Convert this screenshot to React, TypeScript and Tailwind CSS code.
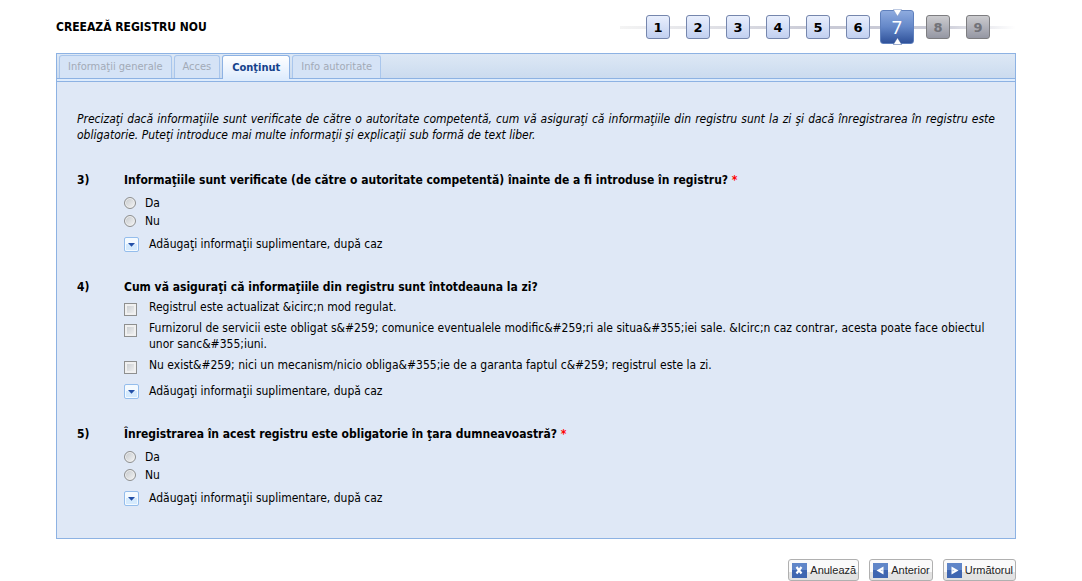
import React, { useState } from 'react';
import clsx from 'clsx';

interface Question {
  id: string;
  number: string;
  title: string;
  required?: boolean;
  type: 'radio' | 'checkbox';
  options: string[];
}

const tabs = ['Informaţii generale', 'Acces', 'Conţinut', 'Info autoritate'];

const steps = [1, 2, 3, 4, 5, 6, 7, 8, 9];
const currentStep = 7;

const questions: Question[] = [
  {
    id: 'verified',
    number: '3)',
    title: 'Informaţiile sunt verificate (de către o autoritate competentă) înainte de a fi introduse în registru?',
    required: true,
    type: 'radio',
    options: ['Da', 'Nu'],
  },
  {
    id: 'updated',
    number: '4)',
    title: 'Cum vă asiguraţi că informaţiile din registru sunt întotdeauna la zi?',
    type: 'checkbox',
    options: [
      'Registrul este actualizat &icirc;n mod regulat.',
      'Furnizorul de servicii este obligat s&#259; comunice eventualele modific&#259;ri ale situa&#355;iei sale. &Icirc;n caz contrar, acesta poate face obiectul unor sanc&#355;iuni.',
      'Nu exist&#259; nici un mecanism/nicio obliga&#355;ie de a garanta faptul c&#259; registrul este la zi.',
    ],
  },
  {
    id: 'mandatory',
    number: '5)',
    title: 'Înregistrarea în acest registru este obligatorie în ţara dumneavoastră?',
    required: true,
    type: 'radio',
    options: ['Da', 'Nu'],
  },
];

const StepButton: React.FC<{ step: number }> = ({ step }) => {
  if (step === currentStep) {
    return (
      <button
        type="button"
        aria-current="step"
        className="relative -ml-1.5 -mr-1 flex h-[34px] w-[34px] items-center justify-center rounded-[3px] border border-[#5f80bd] bg-linear-to-b from-[#8eabdf] via-[#6487c8] to-[#30529a] font-['Noto_Sans',sans-serif] text-lg text-white"
      >
        <svg className="absolute -top-0.5 left-3 h-2 w-[9px]" viewBox="0 0 9 8" aria-hidden="true">
          <path d="M.3 .5h8.4L4.5 7.3z" fill="#fff" stroke="#7d95c4" strokeWidth=".5" />
        </svg>
        {step}
        <svg className="absolute -bottom-0.5 left-3 h-2 w-[9px]" viewBox="0 0 9 8" aria-hidden="true">
          <path d="M.3 7.5h8.4L4.5 .7z" fill="#fff" stroke="#3c5a98" strokeWidth=".5" />
        </svg>
      </button>
    );
  }

  return (
    <button
      type="button"
      disabled={step > currentStep}
      className={clsx(
        "flex h-6 w-6 items-center justify-center rounded-[3px] border pt-px font-['DejaVu_Sans',sans-serif] text-[13px] font-bold",
        step > currentStep
          ? 'border-[#7d7d80] bg-linear-to-b from-[#cccccf] to-[#9597a3] text-[#717278]'
          : 'border-[#7586ad] bg-linear-to-b from-[#e9effd] to-[#c2d0f0] text-black'
      )}
    >
      {step}
    </button>
  );
};

const Expander: React.FC = () => (
  <button type="button" className="flex h-4 items-center gap-2.5 text-left">
    <svg className="h-[15px] w-[15px]" viewBox="0 0 15 15" aria-hidden="true">
      <rect x=".5" y=".5" width="14" height="14" rx="1.5" fill="#f4faff" stroke="#94bdec" />
      <path d="M2 7h11v6H2z" fill="#d5eafd" />
      <path d="M4 6h7L7.5 9.8z" fill="#2350a8" />
    </svg>
    Adăugaţi informaţii suplimentare, după caz
  </button>
);

const QuestionBlock: React.FC<{ question: Question }> = ({ question }) => (
  <fieldset className="flex">
    <div className="w-[47px] shrink-0 font-bold">{question.number}</div>
    <div className="min-w-0 flex-1">
      <legend className="font-bold">
        {question.title}
        {question.required && <span className="text-[#f00]"> *</span>}
      </legend>

      {question.type === 'radio' ? (
        <div className="my-1.5">
          {question.options.map((option) => (
            <label key={option} className="flex h-[18px] items-center gap-[9px]">
              <input
                type="radio"
                name={question.id}
                className="h-3 w-3 appearance-none rounded-full border border-[#8e8f8f] bg-linear-to-br from-[#c4c8cc] to-[#f6f6f6] shadow-[inset_0_0_0_1px_#f0f0f0] checked:from-[#2350a8] checked:to-[#6086c8]"
              />
              {option}
            </label>
          ))}
        </div>
      ) : (
        <div className="mb-2.5 mt-1 flex flex-col gap-[5px]">
          {question.options.map((option) => (
            <label key={option} className="flex items-start gap-3">
              <input
                type="checkbox"
                name={question.id}
                className="-mb-1 mt-1 h-[13px] w-[13px] shrink-0 appearance-none border border-[#8e8f8f] bg-linear-to-br from-[#c4c8cc] to-[#f6f6f6] shadow-[inset_0_0_0_2px_#f0f0f0] checked:from-[#2350a8] checked:to-[#6086c8]"
              />
              <span>{option}</span>
            </label>
          ))}
        </div>
      )}

      <Expander />
    </div>
  </fieldset>
);

const ActionButton: React.FC<{ label: string; children: React.ReactNode }> = ({ label, children }) => (
  <button
    type="button"
    className="flex h-[22px] items-center gap-[3px] rounded-[3px] border border-[#b0b0b0] bg-linear-to-b from-[#fafafa] from-60% to-[#e2e2e2] to-60% pl-[3px] pr-0.5 font-['Liberation_Sans',Arial,sans-serif] text-[11px] text-[#222]"
  >
    <svg className="h-[15px] w-[15px]" viewBox="0 0 15 15" aria-hidden="true">
      <path d="M0 0h15v15H0z" fill="#3f66b1" />
      <path d="M0 0h15v7H0z" fill="#6086c8" />
      {children}
    </svg>
    {label}
  </button>
);

export default function App() {
  const [activeTab, setActiveTab] = useState('Conţinut');

  return (
    <main className="bg-white pl-14 pr-[66px] pt-[5px] font-['DejaVu_Sans_Condensed','DejaVu_Sans',sans-serif] text-xs leading-4 text-black">
      <div className="mx-auto max-w-[960px]">
        <header className="flex h-12 items-start justify-between">
          <h1 className="pt-3.5 font-bold">CREEAZĂ REGISTRU NOU</h1>
          <nav
            aria-label="Paşi"
            className="flex h-11 items-center gap-4 bg-[linear-gradient(to_right,#f4f4f4,#c9cad6_50%,#c9cad6_80%,transparent)] bg-[length:100%_3px] bg-center bg-no-repeat px-[26px]"
          >
            {steps.map((step) => (
              <StepButton key={step} step={step} />
            ))}
          </nav>
        </header>

        <section className="border border-[#8db2e3] bg-[#dfe8f6]">
          <div className="border-b border-[#8db2e3] bg-[#deecfd]">
            <div
              role="tablist"
              className="mb-0.5 flex h-[25px] items-end gap-0.5 border-b border-[#8db2e3] bg-linear-to-b from-[#dde8f5] to-[#cbdbef] px-0.5 text-[11px]"
            >
              {tabs.map((tab) => (
                <button
                  key={tab}
                  type="button"
                  role="tab"
                  aria-selected={tab === activeTab}
                  onClick={() => setActiveTab(tab)}
                  className={clsx(
                    'rounded-t-[3px] border border-b-0',
                    tab === activeTab
                      ? '-mb-px h-6 border-[#8db2e3] bg-linear-to-b from-white to-[#deecfd] px-[9px] font-bold text-[#15428b]'
                      : 'h-[23px] border-[#a9c6ec] bg-[#d5e3f6] px-2 text-[#a2aab6]'
                  )}
                >
                  {tab}
                </button>
              ))}
            </div>
          </div>

          <div className="px-5 pb-8 pt-[29px]">
            <p className="mb-[29px] text-justify italic">
              Precizaţi dacă informaţiile sunt verificate de către o autoritate competentă, cum vă asiguraţi că
              informaţiile din registru sunt la zi şi dacă înregistrarea în registru este obligatorie. Puteţi
              introduce mai multe informaţii şi explicaţii sub formă de text liber.
            </p>

            <form className="space-y-[27px]">
              {questions.map((question) => (
                <QuestionBlock key={question.id} question={question} />
              ))}
            </form>
          </div>
        </section>

        <footer className="flex justify-end gap-2.5 pt-5">
          <ActionButton label="Anulează">
            <path d="M4.5 4l5 6.5M9.500 4l-5 6.500" stroke="#fff" strokeWidth="2.2" />
          </ActionButton>
          <ActionButton label="Anterior">
            <path d="M10.500 3.500v8L3.500 7.500z" fill="#fff" />
            <path d="M9.500 6.500v2L7.500 7.500z" fill="#a9bfe2" />
          </ActionButton>
          <ActionButton label="Următorul">
            <path d="M4.500 3.500v8l7-4z" fill="#fff" />
            <path d="M5.500 6.500v2l2-1z" fill="#a9bfe2" />
          </ActionButton>
        </footer>
      </div>
    </main>
  );
}
